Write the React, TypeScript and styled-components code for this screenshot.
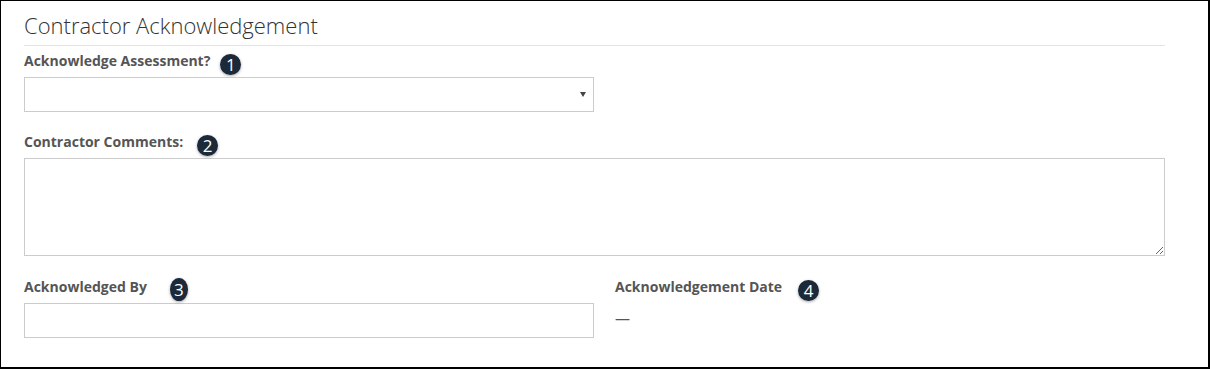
import React from 'react';
import styled, { createGlobalStyle } from 'styled-components';

const GlobalStyle = createGlobalStyle`
    html, body {
        margin: 0;
        padding: 0;
        background: #fff;
    }
    body {
        font-family: 'Open Sans', 'Liberation Sans', Arial, sans-serif;
    }
`;

const Frame = styled.div`
    box-sizing: border-box;
    width: 1210px;
    height: 369px;
    border: 1px solid #000;
    border-right-width: 2px;
    border-bottom-width: 2px;
    padding: 9px 0 0 23px;
    background: #fff;
`;

const Section = styled.div`
    width: 1141px;
`;

const Title = styled.h2`
    margin: 0 0 5px;
    padding-bottom: 5px;
    border-bottom: 1px solid #e5e5e5;
    font-size: 22px;
    line-height: 30px;
    font-weight: 300;
    color: #333;
`;

const Field = styled.div<{ $gap?: number }>`
    margin-top: ${p => p.$gap ?? 0}px;
`;

const LabelRow = styled.div`
    display: flex;
    align-items: flex-start;
    height: 23px;
    margin-bottom: 3px;
`;

const Label = styled.label`
    font-size: 14px;
    line-height: 20px;
    font-weight: 700;
    color: #555;
`;

const Badge = styled.span<{ $offset: number; $narrow?: boolean }>`
    display: inline-flex;
    align-items: center;
    justify-content: center;
    margin-left: ${p => p.$offset}px;
    margin-top: ${p => (p.$narrow ? 1 : 3)}px;
    width: ${p => (p.$narrow ? 18 : 21)}px;
    height: ${p => (p.$narrow ? 23 : 21)}px;
    border-radius: 50%;
    background: #1c2939;
    box-shadow: 0 1px 3px rgba(0, 0, 0, 0.35);
    color: #fff;
    font-size: 17px;
    line-height: 1;
    font-weight: 400;
`;

const SelectWrap = styled.div`
    position: relative;
    width: 570px;

    &::after {
        content: '';
        position: absolute;
        right: 8px;
        top: 15px;
        border-left: 3px solid transparent;
        border-right: 3px solid transparent;
        border-top: 5px solid #444;
        pointer-events: none;
    }
`;

const Select = styled.select`
    appearance: none;
    box-sizing: border-box;
    display: block;
    width: 100%;
    height: 35px;
    margin: 0;
    padding: 6px 24px 6px 10px;
    border: 1px solid #ccc;
    border-radius: 0;
    background: #fff;
    font-family: inherit;
    font-size: 14px;
    color: #555;
    outline: none;
`;

const TextArea = styled.textarea`
    box-sizing: border-box;
    display: block;
    width: 1141px;
    height: 98px;
    margin: 0;
    padding: 6px 10px;
    border: 1px solid #ccc;
    border-radius: 0;
    resize: vertical;
    font-family: inherit;
    font-size: 14px;
    color: #555;
    outline: none;
`;

const TwoCols = styled.div`
    display: grid;
    grid-template-columns: 570px 1fr;
    column-gap: 21px;
    margin-top: 21px;
`;

const TextInput = styled.input`
    box-sizing: border-box;
    display: block;
    width: 570px;
    height: 35px;
    margin: 0;
    padding: 6px 10px;
    border: 1px solid #ccc;
    border-radius: 0;
    font-family: inherit;
    font-size: 14px;
    color: #555;
    outline: none;
`;

const Value = styled.div`
    padding-top: 5px;
    font-size: 15px;
    line-height: 20px;
    color: #555;
`;

export default function App() {
    return (
        <>
            <GlobalStyle />
            <Frame>
                <Section>
                    <Title>Contractor Acknowledgement</Title>
                    <Field>
                        <LabelRow>
                            <Label>Acknowledge Assessment?</Label>
                            <Badge $offset={10}>1</Badge>
                        </LabelRow>
                        <SelectWrap>
                            <Select defaultValue="">
                                <option value=""></option>
                                <option value="yes">Yes</option>
                                <option value="no">No</option>
                            </Select>
                        </SelectWrap>
                    </Field>
                    <Field $gap={20}>
                        <LabelRow>
                            <Label>Contractor Comments:</Label>
                            <Badge $offset={14}>2</Badge>
                        </LabelRow>
                        <TextArea />
                    </Field>
                    <TwoCols>
                        <Field>
                            <LabelRow>
                                <Label>Acknowledged By</Label>
                                <Badge $offset={23} $narrow>3</Badge>
                            </LabelRow>
                            <TextInput type="text" />
                        </Field>
                        <Field>
                            <LabelRow>
                                <Label>Acknowledgement Date</Label>
                                <Badge $offset={16}>4</Badge>
                            </LabelRow>
                            <Value>—</Value>
                        </Field>
                    </TwoCols>
                </Section>
            </Frame>
        </>
    );
}
